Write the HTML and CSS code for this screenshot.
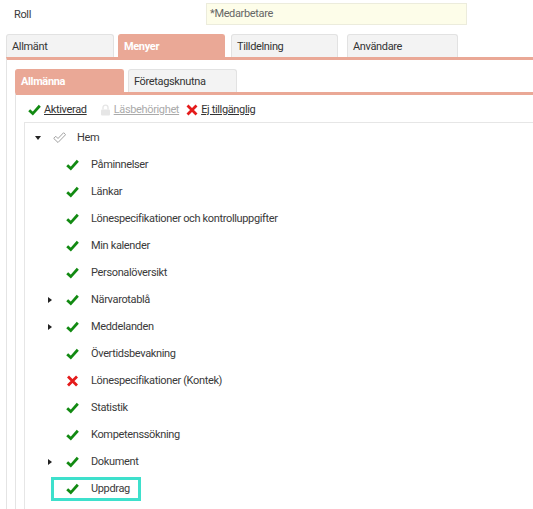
FILE: index.html
```html
<!DOCTYPE html>
<html>
<head>
<meta charset="utf-8">
<link rel="stylesheet" href="styles.css">
</head>
<body>
<div class="page">
  <div class="roll-row">
    <span class="roll-label">Roll</span>
    <div class="roll-input">*Medarbetare</div>
  </div>
  <div class="tabs">
    <div class="tab t1">Allmänt</div>
    <div class="tab t2 active">Menyer</div>
    <div class="tab t3">Tilldelning</div>
    <div class="tab t4">Användare</div>
  </div>
  <div class="panel">
    <div class="subtabs">
      <div class="subtab active">Allmänna</div>
      <div class="subtab">Företagsknutna</div>
    </div>
    <div class="subpanel">
      <div class="legend">
        <span class="leg l1">
          <svg class="ico" width="13" height="12" viewBox="0 0 13 12"><polyline points="1.2,6.2 4.8,9.6 11.8,1.8" fill="none" stroke="#128a12" stroke-width="2.8"/></svg>
          <a class="link">Aktiverad</a>
        </span>
        <span class="leg l2">
          <svg class="ico" width="11" height="12" viewBox="0 0 11 12"><path d="M3 5.5 V3.6 a2.5 2.5 0 0 1 5 0 V5.5" fill="none" stroke="#e6e6e6" stroke-width="1.4"/><rect x="1" y="5.5" width="9" height="6" rx="1" fill="#e6e6e6"/></svg>
          <a class="link dim">Läsbehörighet</a>
        </span>
        <span class="leg l3">
          <svg class="ico" width="12" height="12" viewBox="0 0 12 12"><path d="M1.5 1.5 L10.5 10.5 M10.5 1.5 L1.5 10.5" stroke="#e41b1b" stroke-width="2.8"/></svg>
          <a class="link">Ej tillgänglig</a>
        </span>
      </div>
      <div class="tree">
        <div class="row root">
          <span class="tog down"></span>
          <svg class="ico" width="13" height="12" viewBox="0 0 13 12"><path d="M0.7 6.4 L2.8 4.3 L5 6.5 L10.6 0.7 L12.6 2.7 L5 10.5 Z" fill="none" stroke="#a0a0a0" stroke-width="1"/></svg>
          <span class="txt">Hem</span>
        </div>
        <div class="row"><span class="tog"></span><svg class="ico chk" width="13" height="12" viewBox="0 0 13 12"><polyline points="1.2,6.2 4.8,9.6 11.8,1.8" fill="none" stroke="#128a12" stroke-width="2.8"/></svg><span class="txt">Påminnelser</span></div>
        <div class="row"><span class="tog"></span><svg class="ico chk" width="13" height="12" viewBox="0 0 13 12"><polyline points="1.2,6.2 4.8,9.6 11.8,1.8" fill="none" stroke="#128a12" stroke-width="2.8"/></svg><span class="txt">Länkar</span></div>
        <div class="row"><span class="tog"></span><svg class="ico chk" width="13" height="12" viewBox="0 0 13 12"><polyline points="1.2,6.2 4.8,9.6 11.8,1.8" fill="none" stroke="#128a12" stroke-width="2.8"/></svg><span class="txt">Lönespecifikationer och kontrolluppgifter</span></div>
        <div class="row"><span class="tog"></span><svg class="ico chk" width="13" height="12" viewBox="0 0 13 12"><polyline points="1.2,6.2 4.8,9.6 11.8,1.8" fill="none" stroke="#128a12" stroke-width="2.8"/></svg><span class="txt">Min kalender</span></div>
        <div class="row"><span class="tog"></span><svg class="ico chk" width="13" height="12" viewBox="0 0 13 12"><polyline points="1.2,6.2 4.8,9.6 11.8,1.8" fill="none" stroke="#128a12" stroke-width="2.8"/></svg><span class="txt">Personalöversikt</span></div>
        <div class="row"><span class="tog right"></span><svg class="ico chk" width="13" height="12" viewBox="0 0 13 12"><polyline points="1.2,6.2 4.8,9.6 11.8,1.8" fill="none" stroke="#128a12" stroke-width="2.8"/></svg><span class="txt">Närvarotablå</span></div>
        <div class="row"><span class="tog right"></span><svg class="ico chk" width="13" height="12" viewBox="0 0 13 12"><polyline points="1.2,6.2 4.8,9.6 11.8,1.8" fill="none" stroke="#128a12" stroke-width="2.8"/></svg><span class="txt">Meddelanden</span></div>
        <div class="row"><span class="tog"></span><svg class="ico chk" width="13" height="12" viewBox="0 0 13 12"><polyline points="1.2,6.2 4.8,9.6 11.8,1.8" fill="none" stroke="#128a12" stroke-width="2.8"/></svg><span class="txt">Övertidsbevakning</span></div>
        <div class="row"><span class="tog"></span><svg class="ico chk" width="13" height="12" viewBox="0 0 13 12"><path d="M2 1.5 L11 10.5 M11 1.5 L2 10.5" stroke="#e41b1b" stroke-width="2.8"/></svg><span class="txt">Lönespecifikationer (Kontek)</span></div>
        <div class="row"><span class="tog"></span><svg class="ico chk" width="13" height="12" viewBox="0 0 13 12"><polyline points="1.2,6.2 4.8,9.6 11.8,1.8" fill="none" stroke="#128a12" stroke-width="2.8"/></svg><span class="txt">Statistik</span></div>
        <div class="row"><span class="tog"></span><svg class="ico chk" width="13" height="12" viewBox="0 0 13 12"><polyline points="1.2,6.2 4.8,9.6 11.8,1.8" fill="none" stroke="#128a12" stroke-width="2.8"/></svg><span class="txt">Kompetenssökning</span></div>
        <div class="row"><span class="tog right"></span><svg class="ico chk" width="13" height="12" viewBox="0 0 13 12"><polyline points="1.2,6.2 4.8,9.6 11.8,1.8" fill="none" stroke="#128a12" stroke-width="2.8"/></svg><span class="txt">Dokument</span></div>
        <div class="row hl-row">
          <span class="hl"><svg class="ico chk" width="13" height="12" viewBox="0 0 13 12"><polyline points="1.2,6.2 4.8,9.6 11.8,1.8" fill="none" stroke="#128a12" stroke-width="2.8"/></svg><span class="txt">Uppdrag</span></span>
        </div>
      </div>
    </div>
  </div>
</div>
</body>
</html>
```
FILE: styles.css
```css
* { box-sizing: border-box; }
html, body { margin: 0; padding: 0; background: #fff; }
body {
  font-family: Roboto, "Liberation Sans", sans-serif;
  font-size: 11px;
  letter-spacing: -0.35px;
  color: #3a3a3a;
  width: 533px;
  height: 509px;
  overflow: hidden;
}
.page { width: 533px; }
.roll-row {
  display: flex;
  align-items: center;
  height: 29px;
  padding-top: 3px;
  padding-bottom: 4px;
}
.roll-label {
  width: 206px;
  padding-left: 14px;
}
.roll-input {
  width: 261px;
  height: 22px;
  background: #fdfde9;
  border: 1px solid #ececdc;
  color: #666;
  padding-left: 3px;
  line-height: 20px;
}
.tabs {
  display: flex;
  padding-left: 6px;
  margin-top: 5px;
  height: 23px;
  align-items: flex-end;
}
.tab {
  height: 23px;
  background: #f3f3f3;
  border: 1px solid #e2e2e2;
  border-bottom: none;
  border-radius: 3px 3px 0 0;
  padding: 5px 0 0 5px;
  color: #333;
  width: 108px;
}
.t2 { margin-left: 4px; width: 107px; }
.t3 { margin-left: 6px; width: 107px; }
.t4 { margin-left: 9px; width: 111px; }
.tab.active, .subtab.active {
  background: #eaa896;
  border-color: #eaa896;
  color: #fff;
  font-weight: bold;
}
.panel {
  margin-left: 6px;
  border-top: 3px solid #eaa896;
  border-left: 1px solid #e4e4e4;
  padding: 9px 0 0 8px;
  height: 460px;
}
.subtabs {
  display: flex;
  height: 23px;
}
.subtab {
  width: 109px;
  height: 23px;
  background: #f3f3f3;
  border: 1px solid #e2e2e2;
  border-bottom: none;
  border-radius: 3px 3px 0 0;
  padding: 5px 0 0 5px;
  color: #333;
}
.subtab + .subtab { margin-left: 4px; }
.subpanel {
  border-top: 3px solid #eaa896;
  border-left: 1px solid #e4e4e4;
  padding: 0 0 0 8px;
  height: 430px;
}
.legend {
  display: flex;
  align-items: center;
  height: 27px;
  padding-left: 4px;
  padding-top: 2px;
}
.leg { display: flex; align-items: center; }
.l1 { margin-right: 13px; }
.l2 { margin-right: 7px; }
.leg .ico { margin-right: 3px; }
.link { color: #333; text-decoration: underline; }
.link.dim { color: #aaa; }
.tree {
  border-top: 1px solid #e6e6e6;
  border-left: 1px solid #e6e6e6;
  padding-top: 1px;
  height: 400px;
}
.row {
  display: flex;
  align-items: center;
  height: 27px;
  padding-left: 20px;
}
.row.root { padding-left: 7px; }
.tog { width: 12px; height: 12px; margin-right: 9px; position: relative; flex: none; }
.tog.down::after {
  content: "";
  position: absolute;
  left: 3px; top: 4px;
  border-left: 3px solid transparent;
  border-right: 3px solid transparent;
  border-top: 4px solid #222;
}
.tog.right::after {
  content: "";
  position: absolute;
  left: 3px; top: 3px;
  border-top: 3px solid transparent;
  border-bottom: 3px solid transparent;
  border-left: 4px solid #222;
}
.ico { flex: none; display: block; }
.row .ico { margin-right: 12px; }
.row.root .ico { margin-right: 11px; }
.hl-row { padding-left: 26px; }
.hl {
  display: flex;
  align-items: center;
  height: 24px;
  border: 3px solid #3ee0cc;
  padding: 0 8px 0 12px;
}
```
